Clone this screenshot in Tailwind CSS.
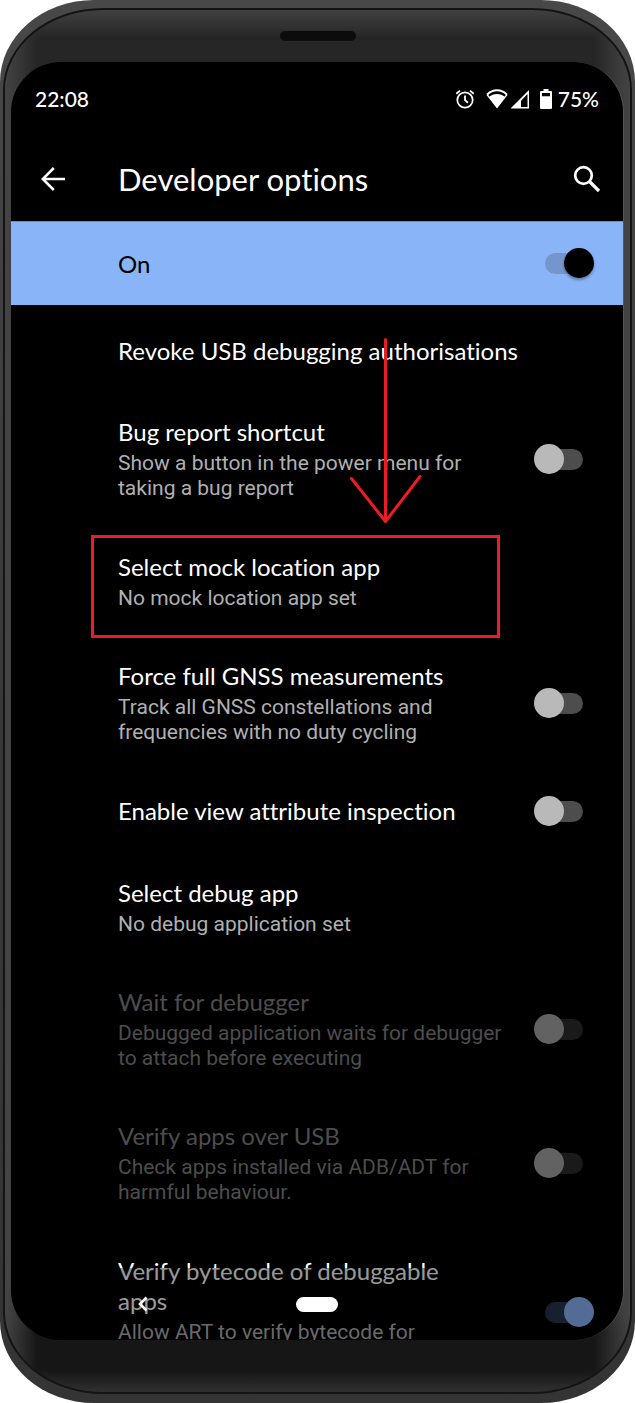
<!DOCTYPE html>
<html lang="en">
<head>
<meta charset="utf-8">
<meta name="viewport" content="width=device-width, initial-scale=1">
<title>Developer options</title>
<script src="https://cdn.jsdelivr.net/npm/@tailwindcss/browser@4"></script>
</head>
<body class="bg-white">
<!-- Phone body: outer rim, dark seam, bezel, screen -->
<div class="relative h-screen overflow-hidden rounded-[94px_94px_94px_94px/82px_82px_82px_82px] bg-linear-to-b from-[#484848] via-[#383838] to-[#343434] px-[3px] pt-[8px] pb-[9px] font-['Lato',sans-serif] [font-variant-ligatures:none]">
  <div class="h-full overflow-hidden rounded-[100px_100px_100px_100px/82px_82px_82px_82px] border-x-2 border-y-2 border-[#141414] bg-[linear-gradient(to_bottom,#404040_0,#262626_28px,#262626_70px,#3a3a3a_120px,#3a3a3a_calc(100%-110px),#161616_calc(100%-60px),#161616_calc(100%-22px),#303030_100%)]">
    <div class="flex h-full flex-col bg-[linear-gradient(to_right,#444_0,#4440_32px,#4440_calc(100%-36px),#444_100%)] px-[6px]">
      <div class="flex h-[52px] shrink-0 justify-center pt-[20px]">
        <div class="h-[12px] w-[78px] rounded-full border border-[#2c2c2c] bg-[#0c0c0c]"></div>
      </div>

      <main class="relative flex min-h-0 flex-1 flex-col overflow-hidden rounded-[50px] border-r border-[#555] bg-black text-white">
        <div class="flex h-[74px] shrink-0 items-center pr-[24px] pl-[24px] text-[21px] leading-[24px] font-medium">
          <span>22:08</span>
          <span class="ml-auto flex items-center">
            <svg class="h-[20px] w-[20px]" viewBox="0 0 20 20" fill="none" stroke="#fff" stroke-width="1.7" aria-label="Alarm set"><circle cx="10" cy="11" r="7.7"/><path d="M10 6.5V11.2l3 2.6M1.3 4.7 5 1.6M18.7 4.7 15 1.6" stroke-width="1.8"/></svg>
            <svg class="ml-[11px] h-[20px] w-[22px]" viewBox="0 0 22 20" aria-label="Wi-Fi"><path d="M1.100 5.600C6.800-.1 15.200-.1 20.900 5.600" fill="none" stroke="#fff" stroke-width="2"/><path d="M1 5.500 11 18.500 21 5.500" fill="none" stroke="#fff" stroke-width="1.300"/><path d="M3 8C7.300 4.100 14.700 4.100 19 8L11 18.700Z" fill="#fff"/></svg>
            <svg class="ml-[2px] h-[20px] w-[20px]" viewBox="0 0 20 20" aria-label="Mobile signal"><path d="M19 1V19.500H.5Z" fill="#fff"/><path d="M17.500 5V18H11V11.700Z" fill="#000"/></svg>
            <svg class="ml-[10px] h-[20px] w-[12px]" viewBox="0 0 12 20" aria-label="Battery"><path d="M3.500 0h5v2H11a1 1 0 0 1 1 1v16a1 1 0 0 1-1 1H1a1 1 0 0 1-1-1V3a1 1 0 0 1 1-1h2.500z" fill="#fff"/><path d="M2 4h8v3.300H2z" fill="#000"/></svg>
            <span class="ml-[6px]">75%</span>
          </span>
        </div>

        <header class="flex h-[85px] shrink-0 items-center pr-[22px] pl-[29px]">
          <button type="button" aria-label="Back" class="w-[78px]">
            <svg class="h-[24px] w-[26px]" viewBox="0 0 26 24" fill="none" stroke="#fff" stroke-width="2.500"><path d="M25 12H3M13.800 1 2.800 12l11 11"/></svg>
          </button>
          <h1 class="text-[31px] leading-[36px]">Developer options</h1>
          <button type="button" aria-label="Search" class="ml-auto">
            <svg class="h-[28px] w-[28px]" viewBox="0 0 28 28" fill="none" stroke="#fff"><circle cx="10.500" cy="10.500" r="8.300" stroke-width="2.700"/><path d="m16.500 16.500 9.500 9.500" stroke-width="3.200"/></svg>
          </button>
        </header>

        <label class="flex h-[84px] shrink-0 items-center justify-between border-t border-[#6f8fc4] bg-[#8ab4f8] pr-[40px] pl-[107px] text-[24px] leading-[30px] text-black">
          On
          <input type="checkbox" role="switch" checked class="relative h-[21px] w-[38px] shrink-0 appearance-none rounded-full bg-[#7596cd] before:absolute before:-top-[5px] before:left-[19px] before:size-[30px] before:rounded-full before:bg-black before:shadow-[0_2px_3px_#0005]">
        </label>

        <div class="flex min-h-0 flex-1 flex-col overflow-hidden pt-[5px] *:shrink-0">
          <a href="#" class="block py-[26px] pl-[107px] text-[24px] leading-[30px]">Revoke USB debugging authorisations</a>

          <label class="flex min-h-[134px] items-center justify-between pr-[40px] pl-[107px]">
            <span class="max-w-[390px]"><span class="block text-[24px] leading-[30px]">Bug report shortcut</span><span class="mt-[4px] block font-['Roboto',sans-serif] text-[21px] leading-[25px] text-[#b0b0b0]">Show a button in the power menu for<br>taking a bug report</span></span>
            <input type="checkbox" role="switch" class="relative h-[21px] w-[38px] shrink-0 appearance-none rounded-full bg-[#4d4d4d] before:absolute before:-top-[5px] before:-left-[11px] before:size-[30px] before:rounded-full before:bg-[#b9b9b9]">
          </label>

          <a href="#" class="block min-h-[110px] pt-[26px] pl-[107px]"><span class="block text-[24px] leading-[30px]">Select mock location app</span><span class="mt-[4px] block font-['Roboto',sans-serif] text-[21px] leading-[25px] text-[#b0b0b0]">No mock location app set</span></a>

          <label class="flex min-h-[134px] items-center justify-between pr-[40px] pl-[107px]">
            <span class="max-w-[390px]"><span class="block text-[24px] leading-[30px]">Force full GNSS measurements</span><span class="mt-[4px] block font-['Roboto',sans-serif] text-[21px] leading-[25px] text-[#b0b0b0]">Track all GNSS constellations and<br>frequencies with no duty cycling</span></span>
            <input type="checkbox" role="switch" class="relative h-[21px] w-[38px] shrink-0 appearance-none rounded-full bg-[#4d4d4d] before:absolute before:-top-[5px] before:-left-[11px] before:size-[30px] before:rounded-full before:bg-[#b9b9b9]">
          </label>

          <label class="flex items-center justify-between py-[26px] pr-[40px] pl-[107px] text-[24px] leading-[30px]">
            Enable view attribute inspection
            <input type="checkbox" role="switch" class="relative h-[21px] w-[38px] shrink-0 appearance-none rounded-full bg-[#4d4d4d] before:absolute before:-top-[5px] before:-left-[11px] before:size-[30px] before:rounded-full before:bg-[#b9b9b9]">
          </label>

          <a href="#" class="block min-h-[110px] pt-[26px] pl-[107px]"><span class="block text-[24px] leading-[30px]">Select debug app</span><span class="mt-[4px] block font-['Roboto',sans-serif] text-[21px] leading-[25px] text-[#b0b0b0]">No debug application set</span></a>

          <label class="flex min-h-[134px] items-center justify-between pr-[40px] pl-[107px]">
            <span class="max-w-[390px] text-[#4d4d4d]"><span class="block text-[24px] leading-[30px]">Wait for debugger</span><span class="mt-[4px] block font-['Roboto',sans-serif] text-[21px] leading-[25px]">Debugged application waits for debugger<br>to attach before executing</span></span>
            <input type="checkbox" role="switch" disabled class="relative h-[21px] w-[38px] shrink-0 appearance-none rounded-full bg-[#1a1a1a] before:absolute before:-top-[5px] before:-left-[11px] before:size-[30px] before:rounded-full before:bg-[#626262]">
          </label>

          <label class="flex min-h-[134px] items-center justify-between pr-[40px] pl-[107px]">
            <span class="max-w-[390px] text-[#4d4d4d]"><span class="block text-[24px] leading-[30px]">Verify apps over USB</span><span class="mt-[4px] block font-['Roboto',sans-serif] text-[21px] leading-[25px]">Check apps installed via ADB/ADT for<br>harmful behaviour.</span></span>
            <input type="checkbox" role="switch" disabled class="relative h-[21px] w-[38px] shrink-0 appearance-none rounded-full bg-[#1a1a1a] before:absolute before:-top-[5px] before:-left-[11px] before:size-[30px] before:rounded-full before:bg-[#626262]">
          </label>

          <label class="flex min-h-[164px] justify-between pt-[26px] pr-[40px] pl-[107px]">
            <span class="max-w-[390px]"><span class="block text-[24px] leading-[30px]">Verify bytecode of debuggable<br>apps</span><span class="mt-[4px] block font-['Roboto',sans-serif] text-[21px] leading-[25px] text-[#b0b0b0]">Allow ART to verify bytecode for</span></span>
            <input type="checkbox" role="switch" checked class="relative mt-[46px] h-[21px] w-[38px] shrink-0 appearance-none rounded-full bg-[#29364b] before:absolute before:-top-[5px] before:left-[19px] before:size-[30px] before:rounded-full before:bg-[#8ab4f8]">
          </label>
        </div>

        <!-- Translucent system navigation over the list -->
        <nav class="absolute inset-x-0 bottom-0 flex h-[72px] items-center justify-center bg-black/40">
          <button type="button" aria-label="Back" class="absolute left-[127px]">
            <svg class="h-[16px] w-[10px]" viewBox="0 0 10 16" fill="none" stroke="#fff" stroke-width="2.600"><path d="M8.500 1.500 2 8l6.500 6.500"/></svg>
          </button>
          <button type="button" aria-label="Home" class="h-[15px] w-[42px] rounded-full bg-white"></button>
        </nav>
      </main>

      <div class="h-[52px] shrink-0"></div>
    </div>
  </div>

  <!-- Red callout -->
  <svg class="pointer-events-none absolute top-[335px] left-[345px] h-[190px] w-[80px]" viewBox="0 0 80 190" fill="none" stroke="#ed1c24" stroke-width="3" stroke-linecap="round" stroke-linejoin="round" aria-hidden="true"><path d="M40.500 4.500V186M6.500 143.500l34 43 34.500-45"/></svg>
  <div class="pointer-events-none absolute top-[535px] left-[91px] h-[103px] w-[409px] border-3 border-[#ed1c24]"></div>
</div>
</body>
</html>
